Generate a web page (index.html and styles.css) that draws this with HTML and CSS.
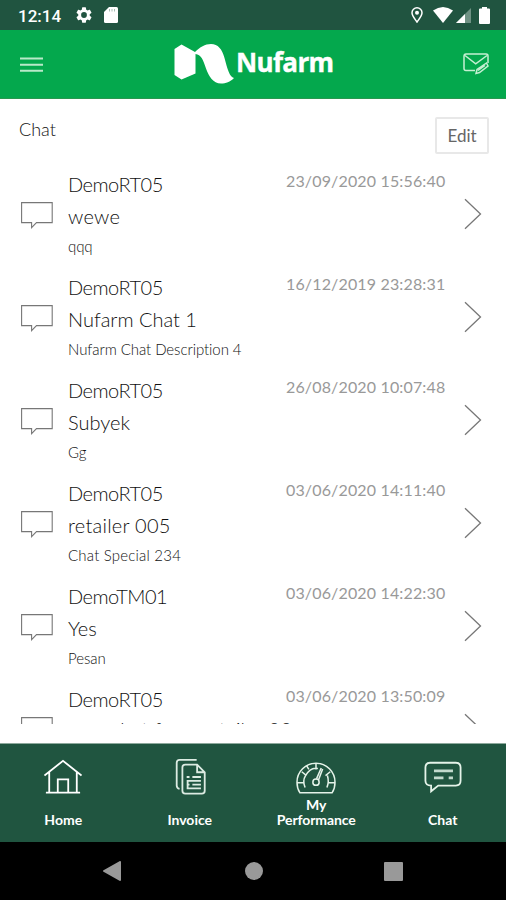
FILE: index.html
```html
<!DOCTYPE html>
<html lang="en">
<head>
<meta charset="utf-8">
<title>Nufarm Chat</title>
<link rel="stylesheet" href="styles.css">
</head>
<body>
<svg class="defs" aria-hidden="true">
  <symbol id="bubble" viewBox="0 0 32 27"><path d="M.6.6h30.6v20H15.5L10.6 25.6V20.6H.6z" fill="none" stroke="#777" stroke-width="1.1"/></symbol>
  <symbol id="chevron" viewBox="0 0 18 32"><path d="M1 1.2 16.5 16 1 30.8" fill="none" stroke="#777" stroke-width="1.3"/></symbol>
</svg>
<div class="status">
  <span class="clock">12:14</span>
  <svg class="gear" viewBox="2 2 20 20"><path fill="#fff" d="M19.14 12.94c.04-.3.06-.61.06-.94 0-.32-.02-.64-.07-.94l2.03-1.58a.49.49 0 0 0 .12-.61l-1.92-3.32a.49.49 0 0 0-.59-.22l-2.39.96c-.5-.38-1.03-.7-1.62-.94l-.36-2.54a.48.48 0 0 0-.48-.41h-3.84a.47.47 0 0 0-.47.41l-.36 2.54c-.59.24-1.13.57-1.62.94l-2.39-.96a.48.48 0 0 0-.59.22L2.74 8.87a.48.48 0 0 0 .12.61l2.03 1.58c-.05.3-.09.63-.09.94s.02.64.07.94l-2.03 1.58a.49.49 0 0 0-.12.61l1.92 3.32c.12.22.37.29.59.22l2.39-.96c.5.38 1.03.7 1.62.94l.36 2.54c.05.24.24.41.48.41h3.84c.24 0 .44-.17.47-.41l.36-2.54c.59-.24 1.13-.56 1.62-.94l2.39.96c.22.08.47 0 .59-.22l1.92-3.32a.48.48 0 0 0-.12-.61l-2.01-1.58zM12 15.6a3.6 3.6 0 1 1 0-7.2 3.6 3.6 0 0 1 0 7.2z"/></svg>
  <svg class="sd" viewBox="0 0 14 16"><path fill="#fff" d="M5 0h7.500Q14 0 14 1.500v13q0 1.500-1.500 1.500h-11Q0 16 0 14.500V5z"/><path stroke="#a9beb5" d="M5.500 2v2.500M8 2v2.500M10.500 2v2.500"/></svg>
  <svg class="pin" viewBox="0 0 12 16"><path fill="none" stroke="#fff" stroke-width="1.500" d="M6 15C4 12 1 9 1 5.800a5 5 0 0 1 10 0C11 9 8 12 6 15z"/><circle cx="6" cy="5.800" r="2" fill="#fff"/></svg>
  <svg class="wifi" viewBox="0 0 20 16"><path fill="#fff" d="M0 3.500Q10-3.500 20 3.500L10 16z"/></svg>
  <svg class="signal" viewBox="0 0 15 15"><path fill="#6f9284" d="M15 0v15H0z"/><path fill="#fff" d="M9 6v9H0z"/></svg>
  <svg class="battery" viewBox="0 0 11 17"><path fill="#fff" d="M3 0h5v1.500h2q1 0 1 1V16q0 1-1 1H1q-1 0-1-1V2.500q0-1 1-1h2z"/></svg>
</div>
<header class="header">
  <svg class="menu" viewBox="0 0 23 15"><path d="M0 1.500h23M0 7.700h23M0 13.700h23" stroke="#b9e9c9" stroke-width="1.900"/></svg>
  <div class="brand">
    <svg class="mark" viewBox="0 0 60 40"><path fill="#fff" d="M.500 5 7.500.500 21 8C26 3 31 0 37 0c7 0 11 5 13.500 14 3 11 5 19 9.500 20-4 4-8 5.500-13 5.500-8 0-12-7-15-15-3-9-5-14-10.500-14.500V29.500L7.500 35.500.500 31z"/></svg>
    <span class="wordmark">Nufarm</span>
  </div>
  <svg class="mail" viewBox="0 0 26 22"><g fill="none" stroke="#c5efd2" stroke-width="1.500"><path d="M12 17.500H3q-2 0-2-2V3.500Q1 1 3 1h20q2 0 2 2v7"/><path d="m2 2.500 10.700 8.300L24 2.500"/><path d="m13 20.500 1-4 9.500-6.500 1.500 3-8.500 6.500zM15 17.500l7-5"/></g></svg>
</header>
<main class="page">
  <div class="toolbar"><h1 class="title">Chat</h1><button class="edit">Edit</button></div>
  <div class="list">
    <article class="row"><svg class="bubble"><use href="#bubble"/></svg><div class="body"><div class="name">DemoRT05</div><div class="subject wide">wewe</div><div class="desc">qqq</div></div><time class="time">23/09/2020 15:56:40</time><svg class="chevron"><use href="#chevron"/></svg></article>
    <article class="row"><svg class="bubble"><use href="#bubble"/></svg><div class="body"><div class="name">DemoRT05</div><div class="subject">Nufarm Chat 1</div><div class="desc">Nufarm Chat Description 4</div></div><time class="time">16/12/2019 23:28:31</time><svg class="chevron"><use href="#chevron"/></svg></article>
    <article class="row"><svg class="bubble"><use href="#bubble"/></svg><div class="body"><div class="name">DemoRT05</div><div class="subject">Subyek</div><div class="desc">Gg</div></div><time class="time">26/08/2020 10:07:48</time><svg class="chevron"><use href="#chevron"/></svg></article>
    <article class="row"><svg class="bubble"><use href="#bubble"/></svg><div class="body"><div class="name">DemoRT05</div><div class="subject wide">retailer 005</div><div class="desc wide">Chat Special 234</div></div><time class="time">03/06/2020 14:11:40</time><svg class="chevron"><use href="#chevron"/></svg></article>
    <article class="row"><svg class="bubble"><use href="#bubble"/></svg><div class="body"><div class="name">DemoTM01</div><div class="subject">Yes</div><div class="desc">Pesan</div></div><time class="time">03/06/2020 14:22:30</time><svg class="chevron"><use href="#chevron"/></svg></article>
    <article class="row"><svg class="bubble"><use href="#bubble"/></svg><div class="body"><div class="name">DemoRT05</div><div class="subject wide peek">new chat from retailer 00</div></div><time class="time">03/06/2020 13:50:09</time><svg class="chevron"><use href="#chevron"/></svg></article>
  </div>
</main>
<nav class="tabs">
  <a class="tab"><svg class="icon" viewBox="0 0 40 40"><g fill="none" stroke="#fff" stroke-width="1.900"><path d="M.500 18.500 20 3l19.500 15.500M5.500 15v21.500M34.500 15v21.500M2 36.500h36M14.500 36V22.500h11V36"/></g></svg><span class="label">Home</span></a>
  <a class="tab"><svg class="icon" viewBox="0 0 40 40"><g fill="none" stroke="#dcebe2" stroke-width="1.900"><path d="M9 32.500q-3-.5-3-3.500V5q0-3 3-3h18"/><path d="M15 7h12.500l8 8v19.500q0 3-3 3H15q-3 0-3-3V10q0-3 3-3zM27.500 7.500V15h7.500"/><path d="M16.500 20h3m3 0h9M16.500 24h15M16.500 28h3m3 0h9M16.500 32h15M17.500 24v8"/></g></svg><span class="label">Invoice</span></a>
  <a class="tab"><svg class="icon wide-icon" viewBox="0 0 42 40"><g fill="none" stroke="#e5f3e9" stroke-width="1.600"><path d="M4 36.500Q1 32 1 25.500a20 20 0 0 1 40 0q0 6.500-3 11z"/><path d="M9.500 31Q6.500 24 10 18.500c4-7 9-8.500 13-7.500M32.500 31q2.500-6 .500-12.500M1 26h6.500M34.500 26H41M6 14.500l5 4M21 6v6M36 14.500l-5 4M11 8l2.500 4"/><circle cx="21" cy="25.500" r="3.300"/><path d="m21.500 22 5-11.500M23.500 23.500l4.500-12"/></g></svg><span class="label perf">My<br>Performance</span></a>
  <a class="tab"><svg class="icon" viewBox="0 0 40 40"><g fill="none" stroke="#e5f3e9" stroke-width="1.900"><path d="M6.500 5h27q5 0 5 5v14q0 5-5 5H15l-7.500 6V29q-6 0-6-5V10q0-5 5-5z"/><path d="M10.500 13.500h20M10.500 21h10m5.500 0h4.500" stroke="#c3dacd" stroke-width="2.800"/></g></svg><span class="label">Chat</span></a>
</nav>
<div class="system">
  <svg class="back" viewBox="0 0 18 20"><path d="M1 10 17 1v18z" fill="#999" stroke="#999" stroke-linejoin="round" stroke-width="2"/></svg>
  <span class="circle"></span><span class="square"></span>
</div>
</body>
</html>
```

FILE: styles.css
```css
* { box-sizing: border-box; }
body { margin: 0; width: 506px; height: 900px; overflow: hidden; display: flex; flex-direction: column; background: #fff; font-family: Lato, "Liberation Sans", sans-serif; font-weight: 300; color: #111; }
svg { display: block; flex: none; }
.defs { position: absolute; width: 0; height: 0; }
.status { height: 30px; flex: none; background: #205440; display: flex; align-items: center; padding: 0 16px 0 18px; }
.clock { font: 500 17px/30px Roboto, sans-serif; color: #fff; width: 58px; padding-top: 1px; }
.gear { width: 16px; height: 16px; }
.sd { width: 14px; height: 16px; margin-left: 12px; }
.pin { width: 12px; height: 16px; margin-left: auto; }
.wifi { width: 20px; height: 16px; margin-left: 10px; }
.signal { width: 15px; height: 15px; margin-left: 3px; }
.battery { width: 11px; height: 17px; margin-left: 8px; }
.header { height: 69px; flex: none; background: #04a84d; border-bottom: 1px solid #28984f; display: flex; align-items: center; padding: 0 17px 0 20px; }
.menu { width: 23px; height: 15px; }
.brand { display: flex; margin-left: 131px; height: 40px; }
.mark { width: 60px; height: 40px; }
.wordmark { font: 700 26px/36px "Open Sans", sans-serif; letter-spacing: -.65px; color: #fff; -webkit-text-stroke: .4px #fff; margin-left: 2px; }
.mail { width: 26px; height: 22px; margin-left: auto; }
.page { height: 625px; flex: none; overflow: hidden; }
.toolbar { height: 67px; display: flex; justify-content: space-between; padding: 18px 17px 0 19px; }
.title { font-size: 18px; line-height: 24px; font-weight: 300; margin: 0; }
.edit { width: 54px; height: 37px; border: 2px solid #e8e8e8; border-radius: 2px; background: #fff; padding: 0; font: 400 17px/33px Lato, sans-serif; color: #666; }
.row { height: 103px; display: flex; padding-left: 21px; }
.bubble { width: 32px; height: 27px; margin-top: 36px; }
.body { width: 218px; margin-left: 15px; white-space: nowrap; }
.name { font-size: 20px; line-height: 36px; letter-spacing: -.5px; }
.subject { font-size: 20px; line-height: 29px; }
.subject.wide { letter-spacing: .25px; }
.subject.peek { line-height: 24px; }
.desc { font-size: 15px; line-height: 31px; letter-spacing: -.07px; }
.desc.wide { letter-spacing: .2px; }
.time { width: 160px; font-size: 16px; line-height: 30px; font-weight: 400; letter-spacing: .15px; color: #999; white-space: nowrap; }
.chevron { width: 18px; height: 32px; margin: 32px 0 0 18px; }
.tabs { height: 99px; flex: none; margin-top: 19px; background: #205540; border-top: 1px solid #8da99c; display: grid; grid-template-columns: repeat(4, 1fr); }
.tab { display: flex; flex-direction: column; align-items: center; justify-content: space-between; padding: 14px 0 15px; color: #fff; }
.icon { width: 38px; height: 38px; margin-bottom: -10px; }
.wide-icon { width: 40px; }
.label { font-size: 14px; line-height: 15px; font-weight: 700; text-align: center; }
.perf { letter-spacing: -.1px; }
.system { height: 58px; flex: none; background: #000; display: flex; align-items: center; padding-left: 103px; }
.back { width: 18px; height: 20px; }
.circle { width: 18px; height: 18px; border-radius: 50%; background: #999; margin-left: 124px; }
.square { width: 19px; height: 19px; border-radius: 1px; background: #999; margin-left: 121px; }
```
